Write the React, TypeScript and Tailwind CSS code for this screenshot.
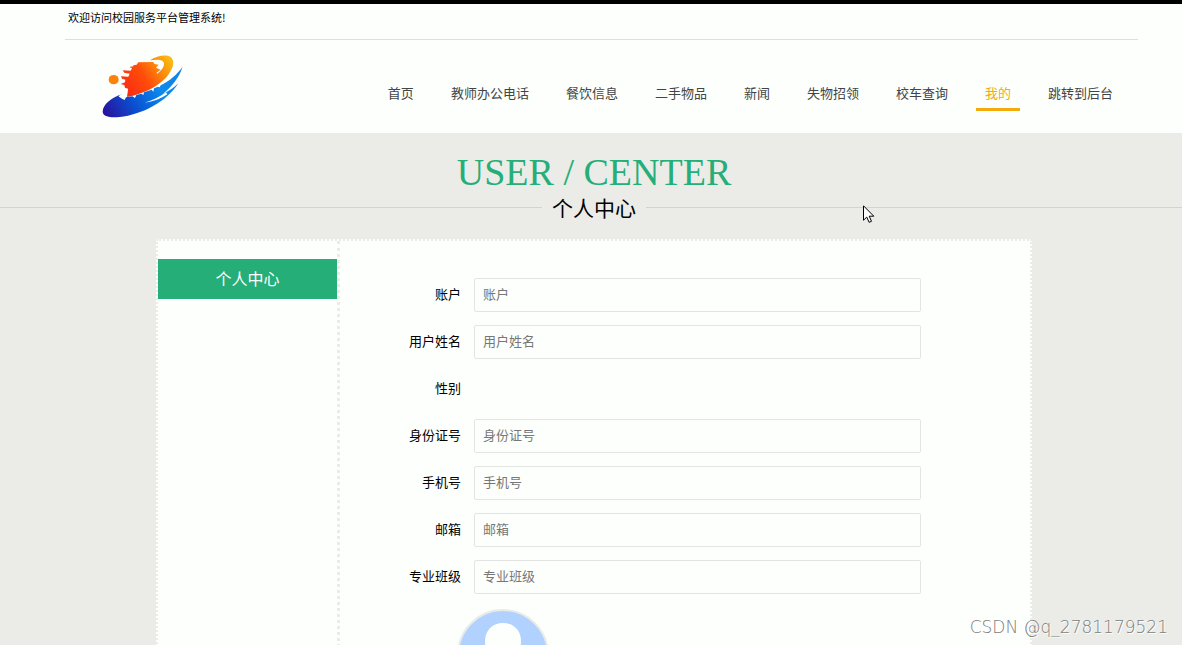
const navItems = [
  '首页',
  '教师办公电话',
  '餐饮信息',
  '二手物品',
  '新闻',
  '失物招领',
  '校车查询',
  '我的',
  '跳转到后台',
];

const fields = [
  { id: 'account', label: '账户' },
  { id: 'username', label: '用户姓名' },
  { id: 'gender', label: '性别', empty: true },
  { id: 'idcard', label: '身份证号' },
  { id: 'phone', label: '手机号' },
  { id: 'email', label: '邮箱' },
  { id: 'classname', label: '专业班级' },
];

export default function App() {
  return (
    <div className="relative h-screen overflow-hidden bg-[#ebece8] font-['Noto_Sans_CJK_SC',sans-serif] text-black">
      <Header />

      <div className="-mr-[6px]">
        <PageTitle />

        <main className="mx-auto flex min-h-screen max-w-[876px] border-2 border-dotted border-[#ebece8] bg-[#fdfffc]">
          {/* Side menu */}
          <aside className="w-[182px] shrink-0 border-r-3 border-dotted border-[#ebece8] pt-[18px]">
            <a href="#center" className="block h-10 bg-[#25ae78] text-center text-base leading-[38px] text-white">
              个人中心
            </a>
          </aside>

          <ProfileForm />
        </main>
      </div>

      <Pointer />
      <p className="absolute right-[14px] bottom-[6px] font-['DejaVu_Sans',sans-serif] text-[17px] font-extralight leading-6 text-[#7d7e7c] [text-shadow:1px_1px_0_#fff]">
        CSDN @q_2781179521
      </p>
    </div>
  );
}

function Header() {
  return (
    <header className="border-t-4 border-black bg-[#fdfffc]">
      <div className="ml-[65px] mr-[44px]">
        <p className="h-9 border-b border-[#dddfdd] pl-[3px] text-[11px] leading-[26px]">
          欢迎访问校园服务平台管理系统!
        </p>
        <div className="flex h-[93px] items-start justify-between pr-[16px] pl-[33px] pt-[10px]">
          <a href="#home" aria-label="首页">
            <Logo />
          </a>
          <nav className="flex gap-[19px] pt-7">
            {navItems.map((item) => (
              <a
                key={item}
                href="#nav"
                className={
                  item === '我的'
                    ? 'whitespace-nowrap border-b-3 border-[#f3ab0b] px-[9px] text-[13px] leading-[30px] text-[#f3ab0b]'
                    : 'whitespace-nowrap px-[9px] text-[13px] leading-[30px] text-[#444]'
                }
              >
                {item}
              </a>
            ))}
          </nav>
        </div>
      </div>
    </header>
  );
}

function PageTitle() {
  return (
    <div className="h-[106px] pt-4">
      <p className="text-center font-['Liberation_Serif',serif] text-[38px] leading-[46px] text-[#25ae78]">
        USER / CENTER
      </p>
      <div className="flex h-6 items-center">
        <span className="h-px flex-1 bg-[#d2d4d1]" />
        <h1 className="px-[10px] text-[21px] leading-6">个人中心</h1>
        <span className="h-px flex-1 bg-[#d2d4d1]" />
      </div>
    </div>
  );
}

function ProfileForm() {
  return (
    <form className="flex flex-1 flex-col gap-[13px] pt-[37px] pr-[109px] pl-4">
      {fields.map((field) => (
        <div key={field.id} className="flex h-[34px] items-center gap-[13px]">
          {field.empty ? (
            <span className="w-[105px] shrink-0 pb-[3px] text-right text-[13px]">{field.label}</span>
          ) : (
            <>
              <label htmlFor={field.id} className="w-[105px] shrink-0 pb-[3px] text-right text-[13px]">
                {field.label}
              </label>
              <input
                id={field.id}
                type="text"
                placeholder={field.label}
                className="h-full min-w-0 flex-1 rounded-xs border border-[#e4e5e3] bg-transparent px-2 pb-[3px] text-[13px] placeholder:text-[#777]"
              />
            </>
          )}
        </div>
      ))}
      <button type="button" aria-label="上传头像" className="mt-[2px] ml-[101px] size-[92px]">
        <Avatar />
      </button>
    </form>
  );
}

function Avatar() {
  return (
    <svg width="92" height="92" viewBox="0 0 92 92">
      <circle cx="46" cy="46" r="45" fill="#b1d2ff" stroke="#e9ebe8" strokeWidth="2" />
      <path d="M28 32c0-10 7-18 18-18s18 8 18 18c0 12-7 22-18 22S28 44 28 32z" fill="#fdfffc" />
      <path d="M14 77c4-14 16-20 32-20s28 6 32 20a44 44 0 0 1-64 0z" fill="#fdfffc" />
    </svg>
  );
}

function Pointer() {
  return (
    <svg className="absolute top-[205px] left-[863px]" width="12" height="19" viewBox="0 0 12 19">
      <path
        d="M.5.8v14.4l3.3-3.1 2.3 5.2 2.4-1-2.3-5.1h4.6z"
        fill="#fff"
        stroke="#000"
        strokeWidth="1"
      />
    </svg>
  );
}

function Logo() {
  return (
    <svg width="90" height="72" viewBox="0 0 270 216">
      <defs>
        <linearGradient id="flame" x1="80" y1="125" x2="215" y2="30" gradientUnits="userSpaceOnUse">
          <stop offset="0" stopColor="#fb2a12" />
          <stop offset="0.45" stopColor="#ff4d0a" />
          <stop offset="0.75" stopColor="#fb8a0c" />
          <stop offset="1" stopColor="#f9b812" />
        </linearGradient>
        <linearGradient id="wave" x1="15" y1="190" x2="245" y2="60" gradientUnits="userSpaceOnUse">
          <stop offset="0" stopColor="#2a0f9c" />
          <stop offset="0.35" stopColor="#0a4fd0" />
          <stop offset="0.7" stopColor="#0a8af0" />
          <stop offset="1" stopColor="#1583dd" />
        </linearGradient>
      </defs>
      <ellipse cx="47" cy="89" rx="15" ry="14" fill="#fb8309" />
      {/* Arc */}
      <path
        d="M156 31c20-14 52-19 63-9 14 14 5 37-14 60-27 29-70 51-118 59l10-40 78-28c16-10 24-24 23-33-2-12-22-13-42-9z"
        fill="url(#flame)"
      />
      {/* Tower */}
      <path
        d="M106 46l10-2 5-7 45-1 3 6 13 2-8 9 14 6-12 9 4 14-40 40-52 16 2-22-9-3-2-8-11-3 13-5 1-8-10-3-3-7 22 1 4-9-16-3-5-7 24 1 4-7-8-4 12-2z"
        fill="url(#flame)"
      />
      {/* Wave */}
      <path
        d="M72 133c-31 8-58 32-58 52 0 14 22 19 51 16 66-6 143-47 176-101-14 14-29 24-47 32 28-22 49-49 60-82-16 22-38 42-66 56l-3 6-5-2-12 5-2 10-5-6-23 8-2 8-6-4-15 4-4 9-8-5-19 3-4 8-8-4-9-6c-3-1 1-4 9-7z"
        fill="url(#wave)"
      />
      <path d="M204 127c-19 14-42 25-64 31 26-3 49-12 68-25z" fill="#fdfffc" />
    </svg>
  );
}
